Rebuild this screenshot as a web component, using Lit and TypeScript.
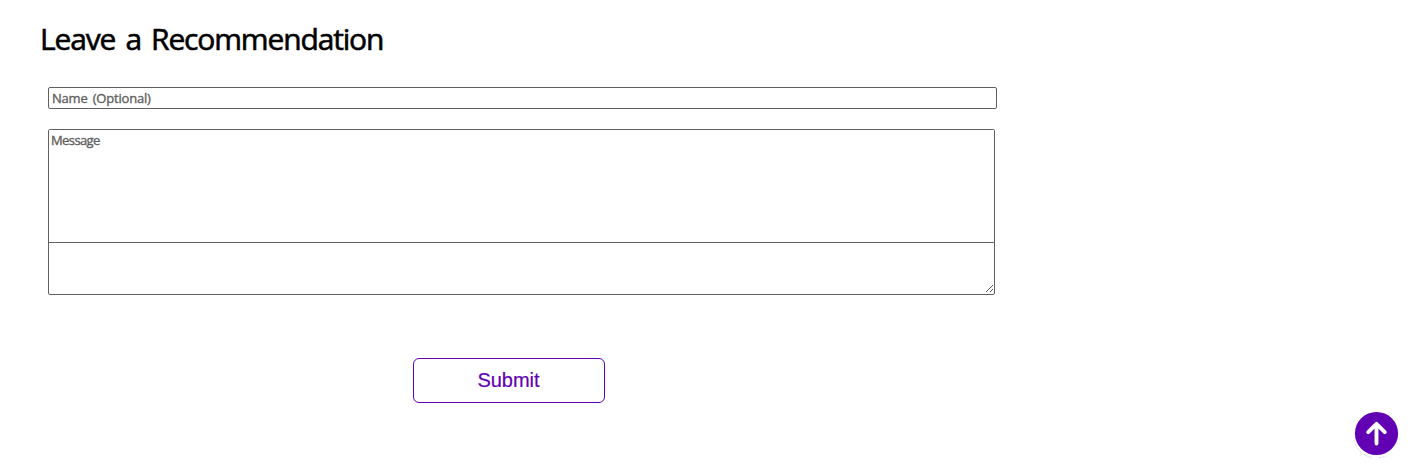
import { LitElement, html, css } from "lit";
import { customElement } from "lit/decorators.js";

@customElement("app-root")
export class AppRoot extends LitElement {
  static styles = css`
    :host {
      display: block;
      position: relative;
      box-sizing: border-box;
      height: 465px;
      padding: 19px 40px 0;
      background: #fff;
      overflow: hidden;
      font-family: "Trebuchet MS", "Open Sans", sans-serif;
    }
    * { box-sizing: border-box; }
    h2 {
      margin: 0;
      height: 40px;
      font-size: 30px;
      line-height: 40px;
      font-weight: 500;
      letter-spacing: -1.15px;
      word-spacing: 3.5px;
      -webkit-text-stroke: 0.6px #000;
      white-space: nowrap;
      color: #000;
    }
    form {
      display: flex;
      flex-direction: column;
      align-items: flex-start;
      width: 957px;
      padding: 28px 0 0 8px;
    }
    .name, .message {
      display: block;
      margin: 0;
      border: 0;
      outline: 0;
      background: #fff;
      font-family: inherit;
      font-size: 13px;
      font-weight: 500;
      line-height: 18px;
      color: #606060;
    }
    ::placeholder {
      color: #606060;
      opacity: 1;
      -webkit-text-stroke: 0.35px #606060;
    }
    .name {
      width: 949px;
      height: 22px;
      padding: 1px 3px;
      border: 1px solid #606060;
      border-radius: 2px;
      letter-spacing: -0.2px;
      word-spacing: 2px;
    }
    .box {
      position: relative;
      width: 947px;
      height: 166px;
      margin-top: 20px;
      border: 1px solid #606060;
      border-radius: 2px;
    }
    .message {
      width: 100%;
      height: 113px;
      padding: 1px 2px;
      border-bottom: 1px solid #606060;
      resize: none;
      overflow: hidden;
      letter-spacing: -0.6px;
    }
    .grip {
      position: absolute;
      right: 1px;
      bottom: 1px;
      width: 8px;
      height: 8px;
    }
    .submit {
      width: 192px;
      height: 45px;
      margin: 63px 0 0 365px;
      padding: 0 1px 1px 0;
      border: 1px solid #6200b3;
      border-radius: 6px;
      background: #fff;
      color: #6200b3;
      font: 20px/24px "Liberation Sans", Arial, sans-serif;
      -webkit-text-stroke: 0.2px #6200b3;
    }
    .top {
      position: absolute;
      right: 8px;
      bottom: 5px;
      width: 48px;
      height: 50px;
      padding: 0;
      border: 0;
      background: none;
    }
    svg { display: block; }
  `;

  render() {
    return html`
      <h2>Leave a Recommendation</h2>
      <form>
        <input class="name" placeholder="Name (Optional)" />
        <div class="box">
          <textarea class="message" placeholder="Message"></textarea>
          <svg class="grip" viewBox="0 0 8 8" shape-rendering="crispEdges">
            <path d="M.5 7.5 7.5.5M4.5 7.5 7.5 4.5" stroke="#505050" fill="none" />
          </svg>
        </div>
        <button class="submit" type="button">Submit</button>
      </form>
      <button class="top" type="button" aria-label="Back to top">
        <svg width="48" height="50" viewBox="0 0 48 50">
          <path d="M1.8 30A23.5 23.5 0 0 0 20 47.5M27 47.6Q31 47.4 34 46" fill="none" stroke="#d9c4ec" stroke-width=".8" stroke-dasharray="2 1" />
          <circle cx="24.5" cy="23.5" r="21.6" fill="#6200b3" />
          <path d="M24.5 33.5V15M16.2 22.2 24.5 13.9 32.8 22.2" fill="none" stroke="#fff" stroke-width="3.9" stroke-linecap="round" stroke-linejoin="round" />
        </svg>
      </button>
    `;
  }
}
